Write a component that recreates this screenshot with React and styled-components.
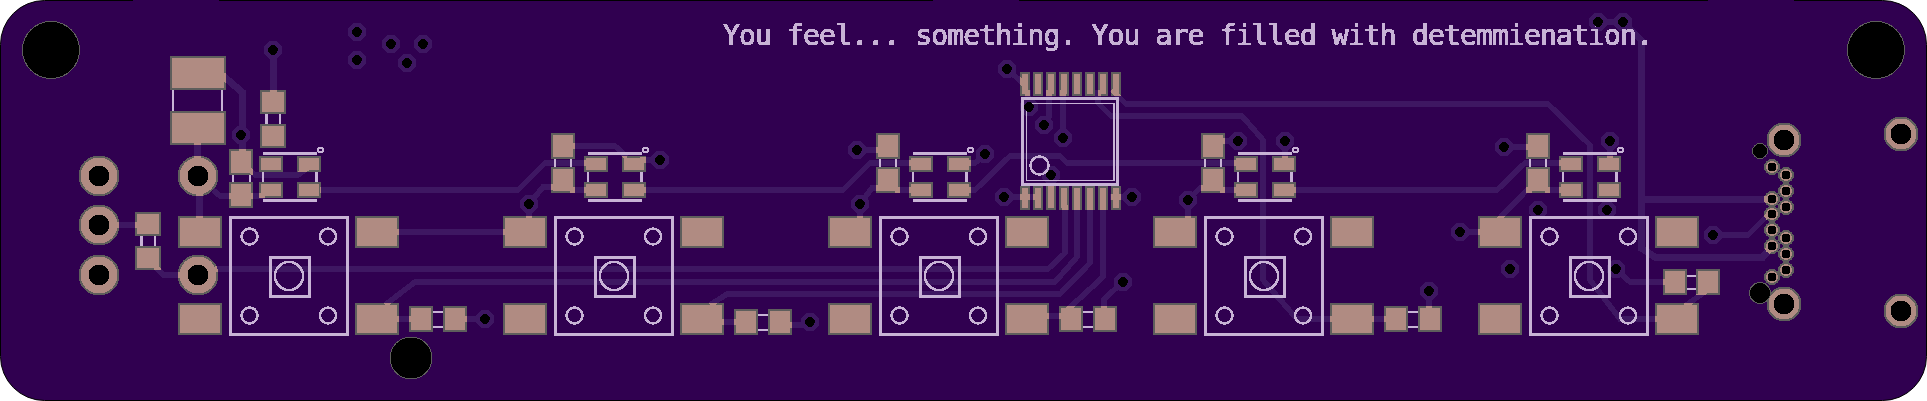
import React from "react";
import styled, { createGlobalStyle } from "styled-components";

const BOARD = "#300050";
const TRACE = "#3e1762";
const COPPER = "#b08b82";
const EDGE = "#5e5e5c";
const SILK = "#c8b3d6";

const GlobalStyle = createGlobalStyle`
  html, body { margin: 0; padding: 0; background: #fff; }
`;

const Page = styled.main`
  display: flex;
  width: 1927px;
  height: 401px;
  overflow: hidden;
`;

const BoardArt = styled.svg`
  display: block;
  width: 1927px;
  height: 401px;
  shape-rendering: crispEdges;
`;

const Outline = styled.rect`
  fill: ${BOARD};
  stroke: #000;
  stroke-width: 1;
  shape-rendering: geometricPrecision;
`;

const EdgeGap = styled.path`
  stroke: ${BOARD};
  stroke-width: 2;
`;

const Trace = styled.path`
  fill: none;
  stroke: ${(p) => p.$color || TRACE};
  stroke-width: ${(p) => p.$w || 5.5};
`;

const ViaRing = styled.polygon`
  fill: ${TRACE};
`;

const Drill = styled.circle`
  fill: #000;
  stroke: ${(p) => (p.$edge ? EDGE : "none")};
  stroke-width: 1;
`;

const Pad = styled.rect`
  fill: ${COPPER};
  stroke: ${EDGE};
  stroke-width: 2;
`;

const RoundPad = styled.circle`
  fill: ${COPPER};
  stroke: ${EDGE};
  stroke-width: 2;
`;

const Silk = styled.path`
  fill: none;
  stroke: ${SILK};
  stroke-width: ${(p) => p.$w || 2.5};
`;

const SilkRing = styled.circle`
  fill: none;
  stroke: ${SILK};
  stroke-width: ${(p) => p.$w || 2.5};
`;

const Legend = styled.text`
  fill: ${SILK};
  stroke: ${SILK};
  stroke-width: 0.7px;
  font-family: "DejaVu Sans Mono", "Liberation Mono", monospace;
  font-size: 28px;
`;

const units = [0, 1, 2, 3, 4];

const vias = [
  [357, 32], [357, 60], [391, 44], [423, 44], [407, 63], [273, 50], [241, 135], [485, 319],
  [660, 160], [529, 204], [810, 322], [857, 150], [860, 204], [985, 154], [1007, 69], [1029, 107],
  [1044, 125], [1063, 138], [1051, 175], [1004, 197], [1132, 197], [1123, 282], [1188, 200],
  [1238, 141], [1285, 141], [1429, 291], [1460, 232], [1504, 147], [1610, 141], [1538, 210],
  [1607, 210], [1713, 235], [1510, 269], [1616, 269], [1598, 22], [1623, 22],
];

// rectangular smd pads: x, y, w, h
const pads = [
  [170, 56, 56, 34], [170, 111, 56, 34],
  [260, 90, 26, 24], [260, 124, 26, 24],
  [135, 212, 26, 24], [135, 246, 26, 24],
  [229, 149, 24, 26], [229, 182, 24, 26],
  [1663, 269, 24, 26], [1696, 269, 24, 26],
];

units.forEach((k) => {
  const dx = k * 325;
  pads.push(
    [178 + dx, 216, 44, 32], [178 + dx, 303, 44, 32],
    [355 + dx, 216, 44, 32], [355 + dx, 303, 44, 32],
    [259 + dx, 156, 24, 16], [297 + dx, 156, 24, 16],
    [259 + dx, 182, 24, 16], [297 + dx, 182, 24, 16]
  );
  if (k > 0) pads.push([226 + dx, 133, 24, 26], [226 + dx, 167, 24, 26]);
  if (k < 4) {
    const y = k === 1 ? 309 : 306;
    pads.push([409 + dx, y, 24, 26], [443 + dx, y, 24, 26]);
  }
});

for (let i = 0; i < 8; i++) {
  const x = Math.round(1020 + i * 12.95);
  pads.push([x, 72, 10, 24], [x, 186, 10, 24]);
}

// through hole pads: x, y, outer radius, drill radius
const holes = [
  [99, 176, 20.5, 10.5], [99, 225, 20.5, 10.5], [99, 275, 20.5, 10.5],
  [198, 176, 20.5, 10.5], [198, 275, 20.5, 10.5],
  [1784, 140, 17.5, 10.5], [1784, 304, 17.5, 10.5],
  [1901, 134, 17.5, 10.5], [1901, 311, 17.5, 10.5],
  [1772, 167, 8, 4.5], [1772, 199, 8, 4.5], [1772, 214, 8, 4.5],
  [1772, 230, 8, 4.5], [1772, 246, 8, 4.5], [1772, 277, 8, 4.5],
  [1786, 175, 8, 4.5], [1786, 191, 8, 4.5], [1786, 207, 8, 4.5],
  [1786, 238, 8, 4.5], [1786, 254, 8, 4.5], [1786, 270, 8, 4.5],
];

const mounts = [
  [51, 50, 28.5], [1876, 50, 28.5], [411, 358, 21], [1760, 151, 7.5], [1760, 293, 10.5],
];

const traces = [
  "M320 190H518L545 163H590",
  "M640 190H843L870 163H915",
  "M965 190H975L1010 156H1060L1067 163H1240",
  "M1290 190H1497L1525 163H1565",
  "M395 232H510",
  "M215 269H1048L1065 253V205",
  "M385 305L415 282H1055L1077 257V205",
  "M710 305L727 294H1060L1090 263V205",
  "M1067 310L1103 277V205",
  "M1123 282L1104 299V312",
  "M1045 316H1065",
  "M1112 90L1126 104H1548L1590 145V280L1620 319H1660",
  "M1098 90V103L1111 116H1242L1263 140V280L1297 319H1390",
  "M1007 69L1025 85",
  "M1049 90V117L1044 125",
  "M1063 90V138",
  "M1029 107H1028V90",
  "M1051 175V192",
  "M1004 197H1040",
  "M1132 197H1110",
  "M213 190L220 196H235",
  "M250 196H265",
  "M250 170L255 175H298L310 166",
  "M99 225H140",
  "M155 266L163 275H182",
  "M395 319H415",
  "M460 319H485",
  "M570 146H615L627 157",
  "M529 204L543 187H556",
  "M570 190H590",
  "M660 160H640",
  "M529 204V220",
  "M720 322H740",
  "M785 325H810",
  "M857 150H880",
  "M860 204L872 188H884",
  "M895 190H915",
  "M860 204V220",
  "M985 154L975 163H960",
  "M1188 200L1200 188H1206",
  "M1188 200V220",
  "M1220 190H1240",
  "M1238 141H1220",
  "M1285 141V160",
  "M1370 319H1390",
  "M1429 291V310",
  "M1460 232H1482",
  "M1504 147H1530",
  "M1498 220L1527 190H1532",
  "M1545 190H1565",
  "M1610 141V160",
  "M1616 269L1630 282H1668",
  "M1706 291L1685 306",
  "M1598 22H1623",
  "M1713 235H1748L1768 215",
];

const wideTraces = [
  "M273 50V94",
  "M222 75L242 92V135V152",
  "M197 141V165",
  "M199 190V220",
  "M1623 22L1641 40V248L1655 257H1763L1772 246",
  "M1641 199H1772",
];

const switchSilk = (dx) =>
  `M${230 + dx} 217H${347 + dx}V334H${230 + dx}Z M${270 + dx} 257H${309 + dx}V296H${270 + dx}Z`;

const ledSilk = (dx) =>
  `M${263 + dx} 153.5H${317 + dx} M${263 + dx} 200.5H${317 + dx} M${263 + dx} 172V182 M${316.5 + dx} 172V182`;

const octagon = (cx, cy, r) => {
  const s = r * 0.414;
  return [
    [cx - s, cy - r], [cx + s, cy - r], [cx + r, cy - s], [cx + r, cy + s],
    [cx + s, cy + r], [cx - s, cy + r], [cx - r, cy + s], [cx - r, cy - s],
  ].map((p) => p.join(",")).join(" ");
};

const App = () => (
  <Page>
    <GlobalStyle />
    <BoardArt viewBox="0 0 1927 401">
      <defs>
        <clipPath id="copper">
          {pads.map(([x, y, w, h]) => (
            <rect key={`${x}-${y}`} x={x} y={y} width={w} height={h} />
          ))}
          {holes.map(([x, y, r]) => (
            <circle key={`${x}-${y}`} cx={x} cy={y} r={r} />
          ))}
        </clipPath>
        <filter id="hardEdge" x="-2%" y="-20%" width="104%" height="140%">
          <feComponentTransfer>
            <feFuncA type="discrete" tableValues="0 1 1" />
          </feComponentTransfer>
        </filter>
      </defs>

      <Outline x="0.5" y="0.5" width="1926" height="400" rx="44" ry="44" />
      <EdgeGap d="M133 0H219 M933 0H1019 M1708 0H1794" />

      {traces.map((d) => <Trace key={d} d={d} />)}
      {wideTraces.map((d) => <Trace key={d} d={d} $w={7} />)}
      {vias.map(([x, y]) => <ViaRing key={`${x}-${y}`} points={octagon(x, y, 9)} />)}

      {pads.map(([x, y, w, h]) => (
        <Pad key={`${x}-${y}`} x={x + 1} y={y + 1} width={w - 2} height={h - 2} />
      ))}
      {holes.map(([x, y, r]) => <RoundPad key={`${x}-${y}`} cx={x} cy={y} r={r - 1} />)}

      <g clipPath="url(#copper)">
        {traces.map((d) => <Trace key={d} d={d} $color={COPPER} />)}
        {wideTraces.map((d) => <Trace key={d} d={d} $w={7} $color={COPPER} />)}
      </g>

      {units.map((k) => {
        const dx = k * 325;
        const cx = [249.5 + dx, 328 + dx];
        return (
          <g key={k}>
            <Silk d={switchSilk(dx)} $w={3} />
            <Silk d={ledSilk(dx)} />
            {cx.map((x) => (
              <React.Fragment key={x}>
                <SilkRing cx={x} cy={236.5} r={8} />
                <SilkRing cx={x} cy={315.5} r={8} />
              </React.Fragment>
            ))}
            <SilkRing cx={289 + dx} cy={276} r={14} />
            <SilkRing cx={320.5 + dx} cy={150} r={2.5} $w={2} />
          </g>
        );
      })}

      <Silk d="M172.5 90V111 M222 90V111" $w={2} />
      <Silk d="M266.5 114V124 M280 114V124" />
      <Silk d="M141.5 236V246 M155 236V246" />
      <Silk d="M233 175V182 M250 175V182" $w={2} />
      {[1, 2, 3, 4].map((k) => (
        <Silk key={k} d={`M${230 + k * 325} 159V167 M${246 + k * 325} 159V167`} $w={2} />
      ))}
      {[0, 1, 2, 3].map((k) => {
        const y = k === 1 ? 3 : 0;
        return <Silk key={k} d={`M${433 + k * 325} ${312 + y}H${443 + k * 325} M${433 + k * 325} ${327 + y}H${443 + k * 325}`} />;
      })}
      <Silk d="M1687 276H1696 M1687 289H1696" />

      <Silk d="M1022.5 98.5H1117.5V184H1022.5Z" $w={3} />
      <Silk d="M1026.5 103.5H1114V180.5H1026.5Z" $w={1.5} />
      <SilkRing cx={1039.5} cy={165.5} r={9} />

      <g filter="url(#hardEdge)">
        <Legend x="723" y="45" textLength="930" lengthAdjust="spacing">
          You feel... something. You are filled with detemmienation.
        </Legend>
      </g>

      {vias.map(([x, y]) => <Drill key={`${x}-${y}`} cx={x} cy={y} r={4.8} />)}
      {holes.map(([x, y, , r]) => <Drill key={`${x}-${y}`} cx={x} cy={y} r={r} />)}
      {mounts.map(([x, y, r]) => <Drill key={`${x}-${y}`} cx={x} cy={y} r={r} $edge />)}
    </BoardArt>
  </Page>
);

export default App;
